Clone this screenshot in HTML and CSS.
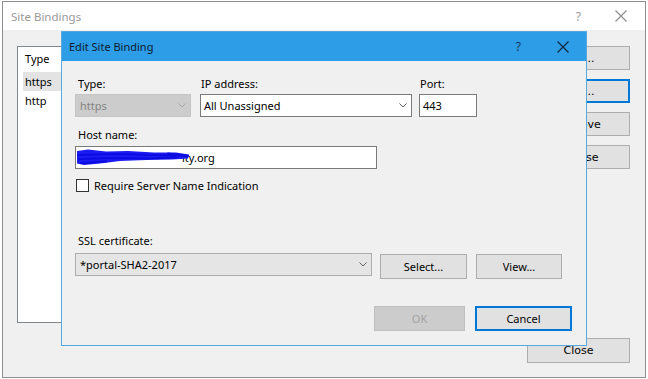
FILE: index.html
```html
<!DOCTYPE html>
<html lang="en">
<head>
  <meta charset="UTF-8" />
  <title>Site Bindings</title>
  <link rel="stylesheet" href="styles.css">
</head>
<body>
  <!-- Site Bindings window (behind) -->
  <div class="window site-bindings">
    <div class="titlebar">
      <span class="title">Site Bindings</span>
      <span class="help">?</span>
      <svg class="close-x" width="12" height="12" viewBox="0 0 12 12">
        <path d="M0.5 0.5 L11.5 11.5 M11.5 0.5 L0.5 11.5" />
      </svg>
    </div>
    <div class="window-body">
      <div class="binding-list">
        <div class="list-head">Type</div>
        <div class="list-row selected">https</div>
        <div class="list-row">http</div>
      </div>
      <div class="side-buttons">
        <button class="win-button">Add...</button>
        <button class="win-button focused">Edit...</button>
        <button class="win-button">Remove</button>
        <button class="win-button">Browse</button>
        <button class="win-button close-button">Close</button>
      </div>
    </div>
  </div>

  <!-- Edit Site Binding dialog (on top) -->
  <div class="window dialog">
    <div class="titlebar">
      <span class="title">Edit Site Binding</span>
      <span class="help">?</span>
      <svg class="close-x" width="12" height="12" viewBox="0 0 12 12">
        <path d="M0.5 0.5 L11.5 11.5 M11.5 0.5 L0.5 11.5" />
      </svg>
    </div>
    <div class="dialog-body">
      <div class="field-row">
        <div class="field field-type">
          <label>Type:</label>
          <div class="combo disabled">
            <span>https</span>
            <svg class="chevron" width="8" height="5" viewBox="0 0 8 5"><path d="M0.5 0.5 L4 4 L7.5 0.5" /></svg>
          </div>
        </div>
        <div class="field field-ip">
          <label>IP address:</label>
          <div class="combo">
            <span>All Unassigned</span>
            <svg class="chevron" width="8" height="5" viewBox="0 0 8 5"><path d="M0.5 0.5 L4 4 L7.5 0.5" /></svg>
          </div>
        </div>
        <div class="field field-port">
          <label>Port:</label>
          <div class="textbox"><span>443</span></div>
        </div>
      </div>

      <div class="field field-host">
        <label>Host name:</label>
        <div class="textbox host-box">
          <span>ity.org</span>
          <svg class="scribble" width="116" height="17" viewBox="0 0 116 17">
            <path class="blob" d="M1 2 L12 0.5 L30 2.5 L52 2 L78 3.5 L100 3.5 L113 5.5 L112 9.5 L96 10.5 L70 11 L44 12 L24 14.5 L8 16 L1 14.5 Z" />
            <path class="stroke" d="M2 6 L40 5 L76 6 L106 6.5 M3 10 L38 9 L70 9.5 L100 8.5 M5 14 L30 12.5 M92 4.5 L112 7" />
          </svg>
        </div>
      </div>

      <div class="check-row">
        <span class="checkbox"></span>
        <span>Require Server Name Indication</span>
      </div>

      <div class="field field-ssl">
        <label>SSL certificate:</label>
        <div class="ssl-row">
          <div class="combo readonly">
            <span>*portal-SHA2-2017</span>
            <svg class="chevron" width="8" height="5" viewBox="0 0 8 5"><path d="M0.5 0.5 L4 4 L7.5 0.5" /></svg>
          </div>
          <button class="dlg-button select-btn">Select...</button>
          <button class="dlg-button view-btn">View...</button>
        </div>
      </div>

      <div class="action-row">
        <button class="dlg-button ok-btn" disabled>OK</button>
        <button class="dlg-button cancel-btn">Cancel</button>
      </div>
    </div>
  </div>
</body>
</html>
```

FILE: styles.css
```css
* {
  box-sizing: border-box;
}

body {
  margin: 0;
  width: 648px;
  height: 379px;
  overflow: hidden;
  position: relative;
  background: #fff;
  font-family: "Noto Sans", sans-serif;
  font-size: 11px;
  color: #000;
}

button {
  font-family: inherit;
  font-size: 11px;
  color: #000;
  padding: 0;
  cursor: default;
}

.window {
  position: absolute;
  display: flex;
  flex-direction: column;
}

.titlebar {
  display: flex;
  align-items: center;
  flex-shrink: 0;
}

.titlebar .title {
  flex: 1;
}

.close-x path {
  fill: none;
  stroke-width: 1.1;
}

/* Site Bindings window */
.site-bindings {
  left: 2px;
  top: 1px;
  width: 644px;
  height: 377px;
  border: 1px solid #8e8e8e;
  background: #f0f0f0;
}

.site-bindings .titlebar {
  height: 28px;
  background: #fff;
  padding: 0 18px 0 8px;
  color: #9a9a9a;
  font-size: 11.5px;
}

.site-bindings .help {
  font-size: 12px;
  margin-right: 34px;
}

.site-bindings .close-x path {
  stroke: #8a8a8a;
}

.window-body {
  flex: 1;
  display: flex;
  gap: 11px;
  padding: 16px 15px 14px 14px;
}

.binding-list {
  width: 499px;
  height: 277px;
  background: #fff;
  border: 1px solid #828790;
  padding: 0 5px;
}

.list-head {
  height: 24px;
  line-height: 24px;
  padding-left: 2px;
}

.list-row {
  height: 19px;
  line-height: 19px;
  padding-left: 2px;
}

.list-row.selected {
  margin-top: 1px;
  background: #e3e3e3;
}

.side-buttons {
  width: 103px;
  display: flex;
  flex-direction: column;
  gap: 9px;
}

.win-button {
  height: 24px;
  background: #e1e1e1;
  border: 1px solid #adadad;
  font-family: "DejaVu Sans", sans-serif;
  font-size: 11px;
}

.win-button.focused {
  border: 2px solid #0078d7;
}

.close-button {
  height: 25px;
  margin-top: auto;
}

/* Edit Site Binding dialog */
.dialog {
  left: 61px;
  top: 31px;
  width: 526px;
  height: 315px;
  border: 1px solid #56a8de;
  background: #f0f0f0;
}

.dialog .titlebar {
  height: 29px;
  background: #2c9de6;
  padding: 0 17px 0 7px;
  color: #0e1a30;
}

.dialog .help {
  font-size: 12px;
  color: #1b3660;
  margin-right: 36px;
}

.dialog .close-x path {
  stroke: #16243c;
}

.dialog-body {
  padding: 15px 0 0 13px;
}

.field label {
  display: block;
  line-height: 16px;
  padding-left: 3px;
}

.field-row {
  display: flex;
}

.field-row .field label {
  margin-bottom: 2px;
}

.field-type {
  width: 116px;
  margin-right: 9px;
}

.field-ip {
  width: 212px;
  margin-right: 7px;
}

.field-port {
  width: 58px;
}

.field-ip label,
.field-port label {
  padding-left: 1px;
}

.combo,
.textbox {
  height: 23px;
  display: flex;
  align-items: center;
  padding-left: 3px;
  background: #fff;
  border: 1px solid #7a7a7a;
}

.combo span {
  flex: 1;
}

.chevron {
  margin-right: 4px;
}

.chevron path {
  fill: none;
  stroke: #606060;
  stroke-width: 1;
}

.combo.disabled {
  background: #cccccc;
  border-color: #c4c4c4;
  color: #858585;
  padding-left: 4px;
}

.combo.disabled .chevron path {
  stroke: #a8a8a8;
}

.combo.readonly {
  width: 297px;
  background: #e5e5e5;
  border-color: #adadad;
  padding-left: 4px;
}

.field-host {
  margin-top: 10px;
}

.field-host label {
  margin-bottom: 3px;
}

.host-box {
  width: 302px;
  position: relative;
  padding-left: 106px;
}

/* redaction scribble drawn over the start of the host name */
.scribble {
  position: absolute;
  left: 0;
  top: 2px;
}

.scribble .blob {
  fill: #1c1cf2;
}

.scribble .stroke {
  fill: none;
  stroke: #0c0ce0;
  stroke-width: 2;
  stroke-linecap: round;
}

.check-row {
  margin-top: 8px;
  height: 16px;
  display: flex;
  align-items: center;
  gap: 5px;
}

.checkbox {
  width: 13px;
  height: 13px;
  margin-left: 1px;
  background: #fff;
  border: 1px solid #333;
}

.field-ssl {
  margin-top: 40px;
}

.field-ssl label {
  margin-bottom: 4px;
}

.ssl-row {
  display: flex;
  align-items: flex-start;
}

.dlg-button {
  height: 25px;
  background: #e1e1e1;
  border: 1px solid #adadad;
}

.select-btn {
  width: 87px;
  margin: 1px 0 0 8px;
}

.view-btn {
  width: 86px;
  margin: 1px 0 0 9px;
}

.action-row {
  margin-top: 27px;
  padding-right: 14px;
  display: flex;
  justify-content: flex-end;
  gap: 10px;
}

.ok-btn {
  width: 91px;
  background: #cccccc;
  border-color: #bfbfbf;
  color: #a3a3a3;
}

.cancel-btn {
  width: 97px;
  border: 2px solid #0078d7;
}
```
